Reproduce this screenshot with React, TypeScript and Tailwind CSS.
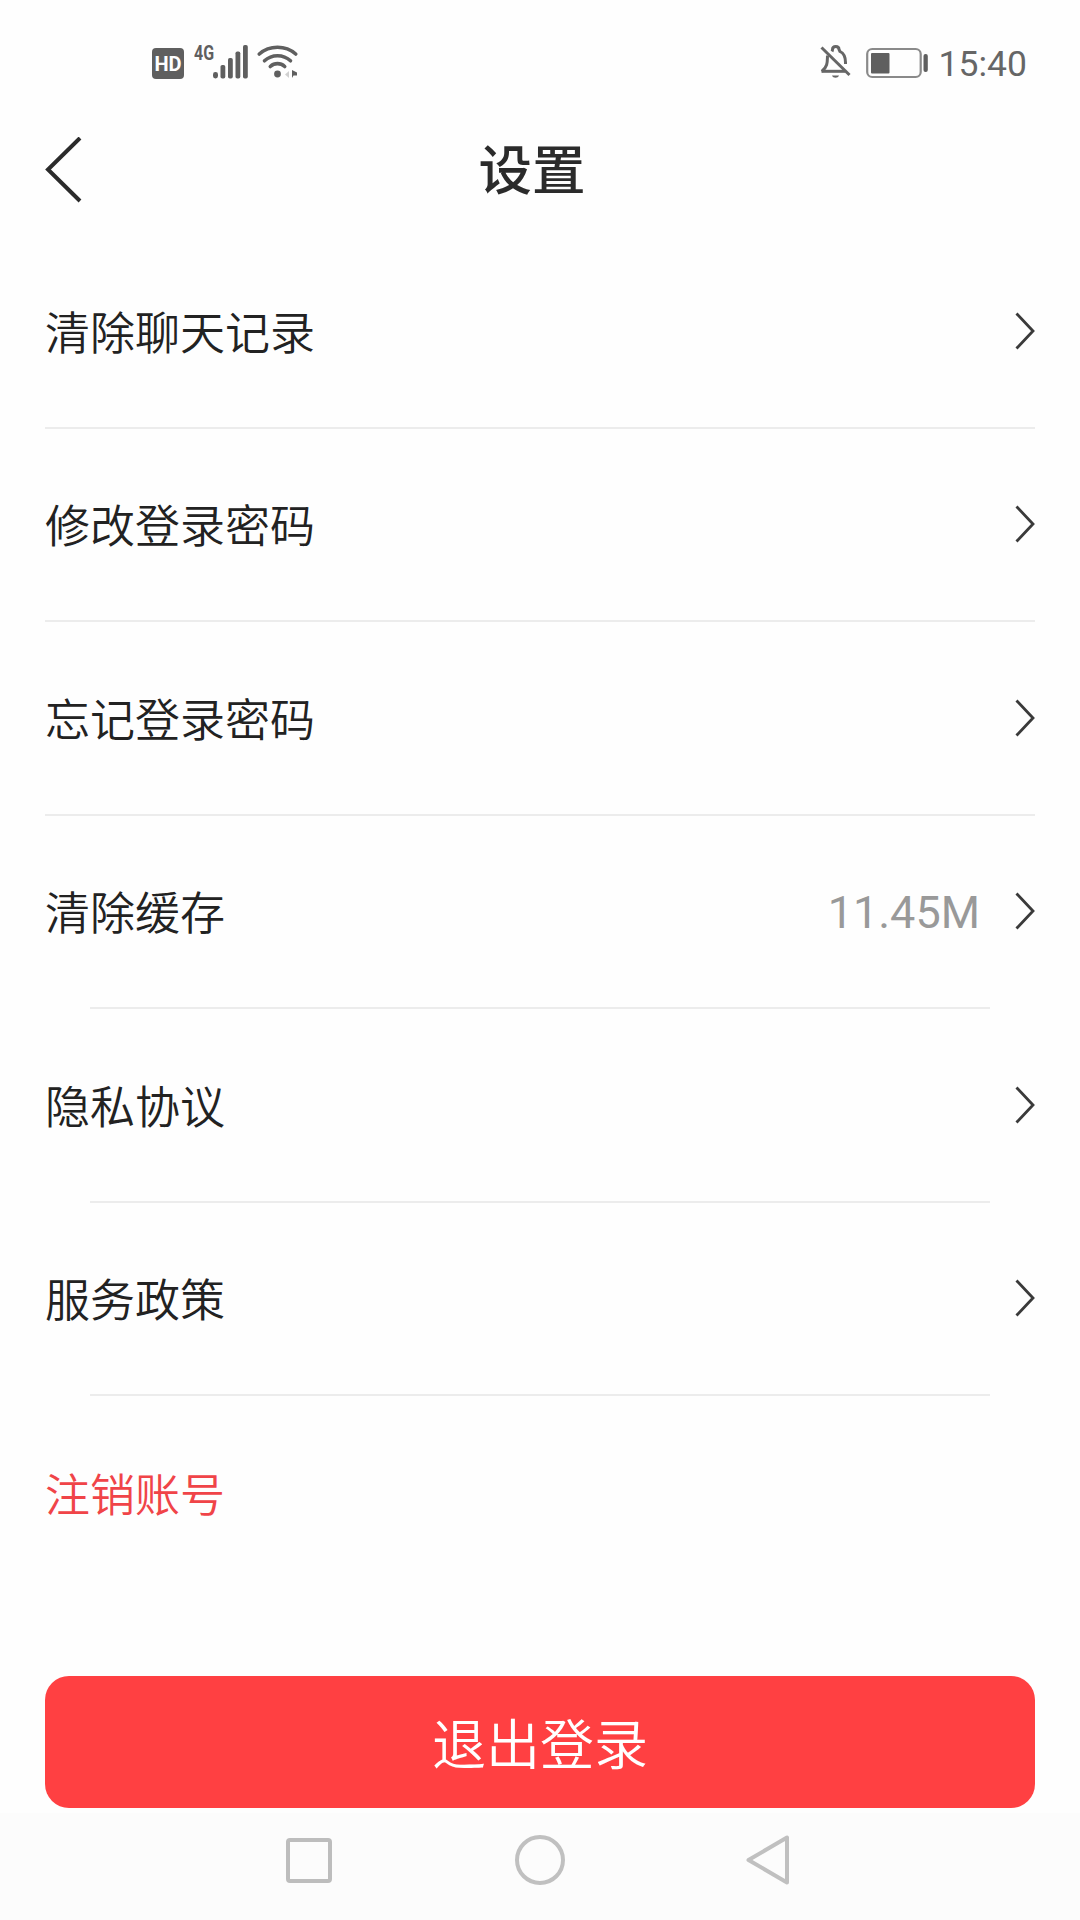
import clsx from "clsx";

interface SettingItem {
  label: string;
  value?: string;
  inset?: boolean;
}

const items: SettingItem[] = [
  { label: "清除聊天记录" },
  { label: "修改登录密码" },
  { label: "忘记登录密码" },
  { label: "清除缓存", value: "11.45M", inset: true },
  { label: "隐私协议", inset: true },
  { label: "服务政策", inset: true },
];

const SignalIcons = () => (
  <div className="flex items-start text-[#5f5f5f]">
    <div className="mt-[4px] flex h-[31px] w-[32px] items-center justify-center rounded-[4px] bg-[#5f5f5f] text-[20px] font-bold leading-none text-white">
      HD
    </div>
    <span className="ml-[10px] w-[20px] origin-left scale-x-[0.8] text-[20px] font-bold leading-[18px]">
      4G
    </span>
    <svg className="-ml-px h-[36px] w-[36px]" viewBox="0 0 36 36" fill="currentColor">
      <rect x="0" y="28" width="5" height="6.500" rx="2.400" />
      <rect x="7.500" y="21" width="4.800" height="13.500" rx="1.800" />
      <rect x="15" y="14" width="4.800" height="20.500" rx="1.800" />
      <rect x="22.500" y="7.500" width="4.800" height="27" rx="1.800" />
      <rect x="30" y="1" width="4.800" height="33.500" rx="1.800" />
    </svg>
    <svg className="ml-[8px] h-[36px] w-[42px]" viewBox="0 0 42 36" fill="none" stroke="currentColor" strokeWidth="3.600" strokeLinecap="round">
      <path d="M2.300 10C12.500 1 28.500 1 38.700 10" />
      <path d="M7.500 16.800C14.800 10 26.200 10 33.500 16.800" />
      <path d="M13.300 22.500C17.500 18.700 23.500 18.700 27.700 22.500" />
      <circle cx="20.500" cy="30" r="3.400" fill="currentColor" stroke="none" />
      <path d="M32 27v7l-4-3.500z" fill="#d0d0d0" stroke="none" />
      <path d="M35 26v8l1.500-2.500h3.500v-3z" fill="currentColor" stroke="none" />
    </svg>
  </div>
);

const StatusBar = () => (
  <header className="flex h-[104px] items-start justify-between pl-[152px] pr-[53px] pt-[44px]">
    <SignalIcons />
    <div className="flex items-start text-[#666]">
      <svg className="h-[36px] w-[32px]" viewBox="0 0 32 36" fill="none" stroke="currentColor" strokeWidth="3">
        <path d="M1.500 3.500L29.500 31" />
        <path d="M7.500 11.500C7.200 17 8.200 22 1.800 27.500" />
        <path d="M1.500 27.300H25" />
        <path d="M12 7.500C12.500 6.500 12.500 6 12.500 5.500C12.500 1.500 19 1.500 19 5.500L20 7.500C24.500 9.500 25.500 13 25.500 18.500V20" />
        <path d="M12 31.500h7c-1 3-6 3-7 0z" fill="currentColor" stroke="none" />
      </svg>
      <svg className="ml-[14px] h-[36px] w-[62px]" viewBox="0 0 62 36" fill="none">
        <rect x="1.200" y="5" width="53.500" height="28" rx="5" stroke="#8a8a8a" strokeWidth="2.200" />
        <rect x="5" y="9" width="18.500" height="20.500" rx="1" fill="#5f5f5f" />
        <rect x="57.500" y="10" width="4.300" height="18" rx="2" fill="#5f5f5f" />
      </svg>
      <span className="ml-[11px] text-[35.5px] leading-[41px]">15:40</span>
    </div>
  </header>
);

const TitleBar = () => (
  <div className="grid h-[131px] grid-cols-[1fr_auto_1fr] items-center pl-[45px] pr-[61px]">
    <svg className="h-[66px] w-[38px]" viewBox="0 0 38 66" fill="none" stroke="#2b2b2b" strokeWidth="4">
      <path d="M35 1L3 32.500L35 64" />
    </svg>
    <h1 className="pt-[4px] text-[53.5px] font-medium leading-none text-[#2b2b2b]">设置</h1>
  </div>
);

const SettingRow = ({ label, value, inset }: SettingItem) => (
  <li className="flex h-[193.5px] flex-col">
    <div className="flex flex-1 items-center justify-between">
      <span className="pt-[7px] text-[45px] font-[350] leading-none text-[#222]">{label}</span>
      <div className="flex items-center">
        {value && <span className="mr-[35px] pt-[3px] text-[45px] leading-none text-[#999]">{value}</span>}
        <svg className="h-[38px] w-[20px]" viewBox="0 0 20 38" fill="none" stroke="#3a3a3a" strokeWidth="2.800">
          <path d="M1.500 1.500L18 19L1.500 36.500" />
        </svg>
      </div>
    </div>
    <div className={clsx("h-[2px] bg-[#ececec]", inset && "mx-[45px]")} />
  </li>
);

const NavBar = () => (
  <nav className="mt-[5px] flex flex-1 items-center justify-between bg-[#fcfcfc] pb-[13px] pl-[286px] pr-[290px]">
    <div className="h-[45px] w-[46px] rounded-[4px] border-4 border-[#bdbdbd]" />
    <div className="ml-[2px] h-[50px] w-[50px] rounded-full border-4 border-[#c0c0c0]" />
    <svg className="h-[52px] w-[44px]" viewBox="0 0 44 52" fill="none" stroke="#c0c0c0" strokeWidth="4" strokeLinejoin="round">
      <path d="M41 3.500V48.500L2.500 26Z" />
    </svg>
  </nav>
);

const App = () => {
  return (
    <div className="flex h-[1920px] w-[1080px] flex-col overflow-hidden bg-[#fefefe] font-['Roboto','Noto_Sans_CJK_SC',sans-serif]">
      <StatusBar />
      <TitleBar />
      <main className="flex flex-col px-[45px]">
        <ul>
          {items.map((item) => (
            <SettingRow key={item.label} {...item} />
          ))}
        </ul>
        <div className="flex h-[193px] items-center pt-[7px] text-[45px] font-[350] leading-none text-[#f04448]">
          注销账号
        </div>
        <button className="mt-[87px] h-[132px] rounded-[24px] bg-[#ff4042] pt-[9px] text-[54px] font-[350] leading-none text-white">
          退出登录
        </button>
      </main>
      <NavBar />
    </div>
  );
};

export default App;
